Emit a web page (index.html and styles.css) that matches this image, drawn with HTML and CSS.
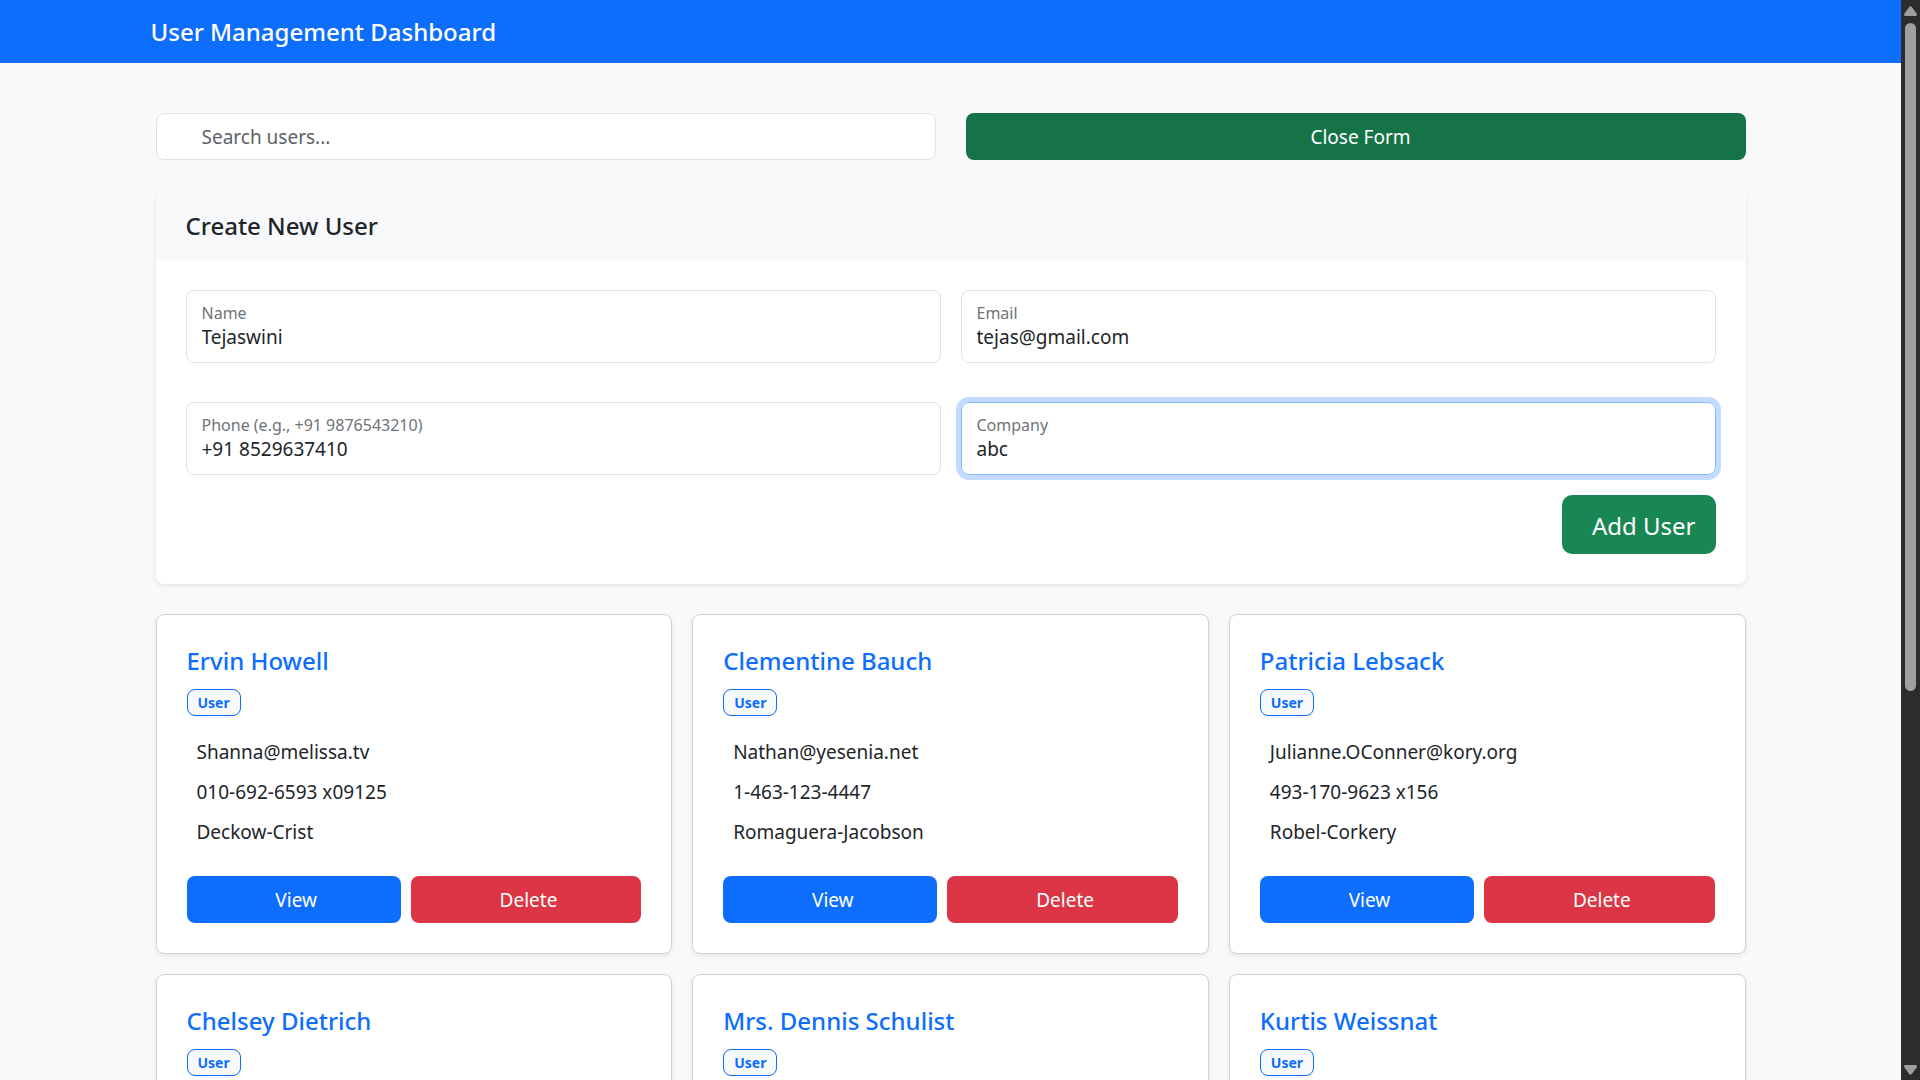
FILE: index.html
```html
<!DOCTYPE html>
<html lang="en">
<head>
<meta charset="utf-8">
<meta name="viewport" content="width=device-width, initial-scale=1">
<title>User Management Dashboard</title>
<link rel="stylesheet" href="styles.css">
</head>
<body>
<div class="window">
  <div class="page">
    <header class="navbar">
      <div class="navbar-inner"><a class="brand" href="#">User Management Dashboard</a></div>
    </header>
    <main class="container">
      <div class="toolbar">
        <input class="search" type="text" placeholder="Search users..." aria-label="Search users">
        <button class="btn btn-close-form" type="button">Close Form</button>
      </div>

      <section class="form-card">
        <h2 class="form-title">Create New User</h2>
        <form class="form-body">
          <div class="fields">
            <div class="field">
              <label for="name">Name</label>
              <input id="name" type="text" value="Tejaswini">
            </div>
            <div class="field">
              <label for="email">Email</label>
              <input id="email" type="email" value="tejas@gmail.com">
            </div>
            <div class="field">
              <label for="phone">Phone (e.g., +91 9876543210)</label>
              <input id="phone" type="text" value="+91 8529637410">
            </div>
            <div class="field field-active">
              <label for="company">Company</label>
              <input id="company" type="text" value="abc">
            </div>
          </div>
          <button class="btn btn-add" type="button">Add User</button>
        </form>
      </section>

      <section class="users">
        <article class="user-card">
          <h3 class="user-name">Ervin Howell</h3>
          <span class="badge">User</span>
          <ul class="details"><li>Shanna@melissa.tv</li><li>010-692-6593 x09125</li><li>Deckow-Crist</li></ul>
          <div class="actions"><button class="btn btn-view" type="button">View</button><button class="btn btn-delete" type="button">Delete</button></div>
        </article>
        <article class="user-card">
          <h3 class="user-name">Clementine Bauch</h3>
          <span class="badge">User</span>
          <ul class="details"><li>Nathan@yesenia.net</li><li>1-463-123-4447</li><li>Romaguera-Jacobson</li></ul>
          <div class="actions"><button class="btn btn-view" type="button">View</button><button class="btn btn-delete" type="button">Delete</button></div>
        </article>
        <article class="user-card">
          <h3 class="user-name">Patricia Lebsack</h3>
          <span class="badge">User</span>
          <ul class="details"><li>Julianne.OConner@kory.org</li><li>493-170-9623 x156</li><li>Robel-Corkery</li></ul>
          <div class="actions"><button class="btn btn-view" type="button">View</button><button class="btn btn-delete" type="button">Delete</button></div>
        </article>
        <article class="user-card">
          <h3 class="user-name">Chelsey Dietrich</h3>
          <span class="badge">User</span>
          <ul class="details"><li>Lucio_Hettinger@annie.ca</li><li>(254)954-1289</li><li>Keebler LLC</li></ul>
          <div class="actions"><button class="btn btn-view" type="button">View</button><button class="btn btn-delete" type="button">Delete</button></div>
        </article>
        <article class="user-card">
          <h3 class="user-name">Mrs. Dennis Schulist</h3>
          <span class="badge">User</span>
          <ul class="details"><li>Karley_Dach@jasper.info</li><li>1-477-935-8478 x6430</li><li>Considine-Lockman</li></ul>
          <div class="actions"><button class="btn btn-view" type="button">View</button><button class="btn btn-delete" type="button">Delete</button></div>
        </article>
        <article class="user-card">
          <h3 class="user-name">Kurtis Weissnat</h3>
          <span class="badge">User</span>
          <ul class="details"><li>Telly.Hoeger@billy.biz</li><li>210.067.6132</li><li>Johns Group</li></ul>
          <div class="actions"><button class="btn btn-view" type="button">View</button><button class="btn btn-delete" type="button">Delete</button></div>
        </article>
      </section>
    </main>
  </div>

  <div class="scrollbar" aria-hidden="true">
    <svg class="arrow" width="13" height="10" viewBox="0 0 13 10"><path d="M5.2 .9Q6.5-.6 7.8.9L12.6 7.5Q13.4 10 11.6 10H1.4Q-.4 10 .4 7.5Z"/></svg>
    <div class="track"><div class="thumb"></div></div>
    <svg class="arrow" width="13" height="10" viewBox="0 0 13 10"><path d="M5.2 9.1Q6.5 10.6 7.8 9.1L12.6 2.5Q13.4 0 11.6 0H1.4Q-.4 0 .4 2.5Z"/></svg>
  </div>
</div>
</body>
</html>
```

FILE: styles.css
```css
* { box-sizing: border-box; }

body {
  margin: 0;
  background: #f8f9fb;
  color: #212529;
  font-family: "Segoe UI", "Noto Sans", sans-serif;
  font-size: 19px;
  line-height: 30px;
}

h2, h3, ul { margin: 0; padding: 0; }

input, button { font: inherit; color: inherit; }

.window { display: flex; height: 100vh; }

.page {
  flex: 1;
  min-width: 0;
  overflow-y: auto;
  scrollbar-width: none;
}

/* Header */
.navbar { background: #0d6efd; }

.navbar-inner {
  max-width: 1650px;
  margin: 0 auto;
  padding: 12px 25px;
}

.brand {
  display: block;
  color: #fff;
  font-size: 24px;
  font-weight: 500;
  line-height: 39px;
  text-decoration: none;
}

.container {
  max-width: 1650px;
  margin: 0 auto;
  padding: 50px 30px;
}

/* Buttons */
.btn {
  border: 0;
  border-radius: 8px;
  padding: 9px 16px 7px;
  color: #fff;
  line-height: 31px;
  cursor: pointer;
}

/* Search and form toggle */
.toolbar {
  display: grid;
  grid-template-columns: 1fr 1fr;
  gap: 30px;
  margin-bottom: 30px;
}

.search {
  width: 100%;
  border: 1px solid #dee2e6;
  border-radius: 8px;
  padding: 8px 16px 6px 45px;
  background: #fff;
  line-height: 31px;
}

.search::placeholder { color: #5c6268; opacity: 1; }

.btn-close-form { padding-left: 26px; background: #157347; }

/* New user form */
.form-card {
  margin-bottom: 30px;
  border-radius: 8px;
  background: #fff;
  box-shadow: 0 2px 5px rgba(0, 0, 0, .08);
}

.form-title {
  padding: 21px 30px 19px;
  border-radius: 8px 8px 0 0;
  background: #f8f9fb;
  font-size: 24px;
  font-weight: 500;
  line-height: 30px;
}

.form-body {
  display: flex;
  flex-direction: column;
  gap: 20px;
  padding: 30px;
}

.fields {
  display: grid;
  grid-template-columns: 1fr 1fr;
  gap: 39px 20px;
}

.field {
  display: flex;
  flex-direction: column;
  border: 1px solid #dee2e6;
  border-radius: 8px;
  padding: 12px 15px 11px;
}

.field label {
  color: #6f7479;
  font-size: 16px;
  line-height: 20px;
}

.field input {
  width: 100%;
  border: 0;
  outline: 0;
  padding: 0;
  background: transparent;
  line-height: 28px;
}

.field-active,
.field:focus-within {
  border-color: #86b7fe;
  box-shadow: 0 0 0 5px #c2dbfe;
}

.btn-add {
  align-self: flex-end;
  padding: 11px 20px 9px 30px;
  border-radius: 10px;
  background: #198754;
  font-size: 24px;
  line-height: 39px;
}

/* User cards */
.users {
  display: grid;
  grid-template-columns: repeat(3, 1fr);
  gap: 20px;
}

.user-card {
  border: 1px solid #d0d3d6;
  border-radius: 8px;
  padding: 30px;
  background: #fff;
  box-shadow: 0 2px 5px rgba(0, 0, 0, .08);
}

.user-name {
  margin-bottom: 12px;
  color: #0d6efd;
  font-size: 24px;
  font-weight: 500;
  line-height: 32px;
}

.badge {
  display: block;
  width: fit-content;
  border: 1px solid #0d6efd;
  border-radius: 8px;
  padding: 0 10px;
  background: #f8f9fa;
  color: #0d6efd;
  font-size: 14px;
  font-weight: 700;
  line-height: 25px;
}

.details {
  display: grid;
  gap: 10px;
  margin: 21px 0 29px;
  padding-left: 10px;
  list-style: none;
}

.actions { display: flex; gap: 10px; }

.actions .btn { flex: 1 1 auto; padding-left: 21px; }

.btn-view { background: #0d6efd; }

.btn-delete { background: #dc3545; }

/* Scroll rail */
.scrollbar {
  display: flex;
  flex-direction: column;
  align-items: center;
  gap: 7px;
  width: 19px;
  padding: 6px 0 5px;
  background: #2c2c2c;
}

.arrow { flex: none; fill: #9f9f9f; }

.track { flex: 1; width: 11px; }

.thumb {
  height: 64.5%;
  border-radius: 6px;
  background: #9f9f9f;
}
```
